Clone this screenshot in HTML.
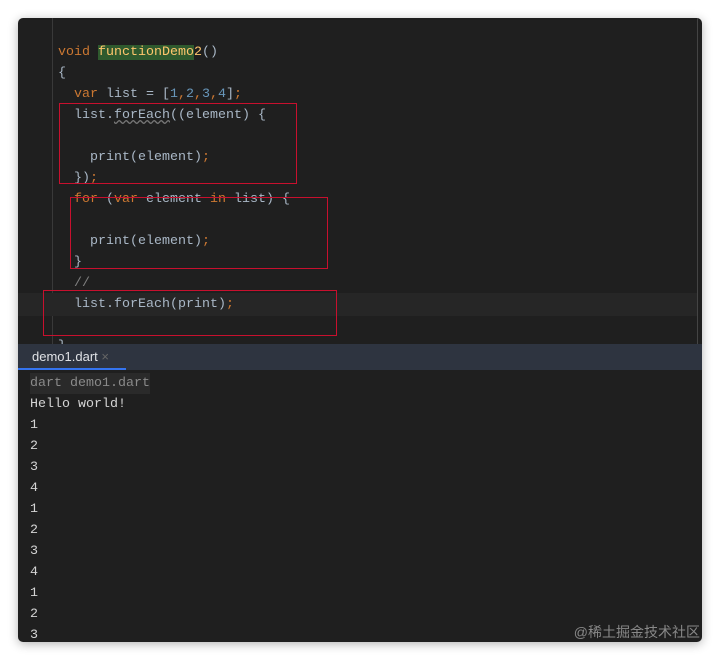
<!DOCTYPE html><html><head><style>
body{margin:0;width:720px;height:660px;background:#fff;position:relative;overflow:hidden}
.win{position:absolute;left:18px;top:18px;width:684px;height:624px;background:#1f1f1f;border-radius:5px;box-shadow:0 2px 10px rgba(0,0,0,.3);overflow:hidden}
.code,.con{position:absolute;font-family:"Liberation Mono",monospace;font-size:13.33px;white-space:pre;line-height:21px}
.l{position:absolute;left:0;height:21px}
.k{color:#cc7832}.f{color:#ffc66d}.n{color:#6897bb}.t{color:#a9b7c6}.c{color:#808080}
.box{position:absolute;border:1.5px solid #c8102e}
</style></head><body>
<div class="win">
<div style="position:absolute;left:34px;top:0;width:1px;height:326px;background:#393939"></div>
<div style="position:absolute;left:0;top:275px;width:680px;height:23px;background:#262626"></div>
<div style="position:absolute;left:679px;top:0;width:1px;height:326px;background:#444"></div>
<div class="code" style="left:40px;top:24px;color:#a9b7c6">
<div class="l" style="top:0"><span class="k">void</span> <span class="f" style="background:#2f5a2e">functionDemo</span><span class="f">2</span>()</div>
<div class="l" style="top:21px">{</div>
<div class="l" style="top:42px">  <span class="k">var</span> list = [<span class="n">1</span><span class="k">,</span><span class="n">2</span><span class="k">,</span><span class="n">3</span><span class="k">,</span><span class="n">4</span>]<span class="k">;</span></div>
<div class="l" style="top:63px">  list.<span style="text-decoration:underline wavy #777">forEach</span>((element) {</div>
<div class="l" style="top:105px">    print(element)<span class="k">;</span></div>
<div class="l" style="top:126px">  })<span class="k">;</span></div>
<div class="l" style="top:147px">  <span class="k">for</span> (<span class="k">var</span> element <span class="k">in</span> list) {</div>
<div class="l" style="top:189px">    print(element)<span class="k">;</span></div>
<div class="l" style="top:210px">  }</div>
<div class="l" style="top:231px"><span class="c">  //</span></div>
<div class="l" style="top:252px">  list.forEach(print)<span class="k">;</span></div>
<div class="l" style="top:294px">}</div>
</div>
<div class="box" style="left:41px;top:85px;width:236px;height:79px"></div>
<div class="box" style="left:52px;top:179px;width:256px;height:70px"></div>
<div class="box" style="left:25px;top:272px;width:292px;height:44px"></div>
<div style="position:absolute;left:0;top:326px;width:684px;height:26px;background:#2e3440"></div>
<div style="position:absolute;left:14px;top:331px;font-family:'Liberation Sans',sans-serif;font-size:13px;color:#dfe1e5">demo1.dart <span style="color:#666">×</span></div>
<div style="position:absolute;left:0;top:350px;width:108px;height:2px;background:#3574f0"></div>
<div class="con" style="left:12px;top:355px;color:#d4d4d4">
<div class="l" style="top:0;color:#8a8a8a;background:#2a2a2a">dart demo1.dart</div>
<div class="l" style="top:21px">Hello world!</div>
<div class="l" style="top:42px">1</div><div class="l" style="top:63px">2</div><div class="l" style="top:84px">3</div><div class="l" style="top:105px">4</div>
<div class="l" style="top:126px">1</div><div class="l" style="top:147px">2</div><div class="l" style="top:168px">3</div><div class="l" style="top:189px">4</div>
<div class="l" style="top:210px">1</div><div class="l" style="top:231px">2</div><div class="l" style="top:252px">3</div>
</div>
<div style="position:absolute;right:2px;top:604px;font-family:'Liberation Sans','Noto Sans CJK SC',sans-serif;font-size:14px;color:#888">@稀土掘金技术社区</div>
</div>
</body></html>
